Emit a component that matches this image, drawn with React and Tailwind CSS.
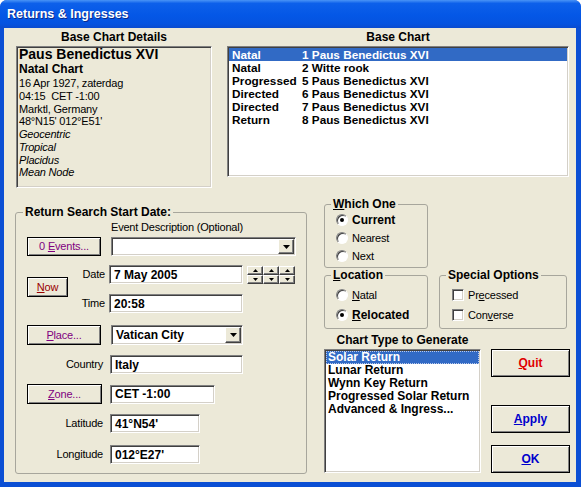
import React from 'react';

const sunken =
  'border border-t-[#808080] border-l-[#808080] border-r-white border-b-white shadow-[inset_1px_1px_0_#404040,inset_-1px_-1px_0_#d4d0c8]';
const raised =
  'bg-[#ece9d8] border border-black shadow-[inset_1px_1px_0_#ffffff,inset_-1px_-1px_0_#808080]';
const small =
  'bg-[#ece9d8] border border-t-white border-l-white border-r-[#404040] border-b-[#404040] shadow-[inset_-1px_-1px_0_#808080]';
// thin label text
const thin = 'text-[11px] tracking-[-0.2px]';
const groupBox = 'border border-[#a7a69c] rounded-[3px] min-w-0';

const Arrow = ({ up, w = 7, h = 4 }) => (
  <svg width={w} height={h} viewBox="0 0 7 4">
    <path d={up ? 'M0 4h7L3.5 0z' : 'M0 0h7L3.5 4z'} fill="#000" />
  </svg>
);

const Btn = ({ className = '', bold, children }) => (
  <button
    type="button"
    className={`${raised} flex items-center justify-center leading-none ${bold ? 'text-[12px] font-bold' : thin} ${className}`}
  >
    {children}
  </button>
);

const Field = ({ className = '', children }) => (
  <div className={`${sunken} bg-white pl-[4px] font-bold text-[12px] flex items-center ${className}`}>{children}</div>
);

const Combo = ({ className = '', text }) => (
  <div className={`${sunken} bg-white flex items-stretch p-[1px] ${className}`}>
    <div className="flex-1 pl-[3px] font-bold text-[12px] flex items-center">{text}</div>
    <div className={`${small} w-[16px] flex items-center justify-center`}>
      <Arrow />
    </div>
  </div>
);

const Spinner = () => (
  <div className="grid grid-cols-3 ml-[4px]">
    {[true, true, true, false, false, false].map((up, i) => (
      <div key={i} className={`${small} w-[16px] h-[9px] flex items-center justify-center`}>
        <Arrow up={up} w={5} h={3} />
      </div>
    ))}
  </div>
);

const Radio = ({ checked }) => (
  <span className="w-[12px] h-[12px] shrink-0 rounded-full bg-white border border-t-[#808080] border-l-[#808080] border-r-white border-b-white shadow-[inset_1px_1px_0_#404040] flex items-center justify-center">
    {checked && <span className="w-[4px] h-[4px] rounded-full bg-black" />}
  </span>
);

const Check = () => <span className={`w-[12px] h-[12px] shrink-0 bg-white ${sunken}`} />;

const baseCharts = [
  ['Natal', '1 Paus Benedictus XVI'],
  ['Natal', '2 Witte rook'],
  ['Progressed', '5 Paus Benedictus XVI'],
  ['Directed', '6 Paus Benedictus XVI'],
  ['Directed', '7 Paus Benedictus XVI'],
  ['Return', '8 Paus Benedictus XVI'],
];

const chartTypes = ['Solar Return', 'Lunar Return', 'Wynn Key Return', 'Progressed Solar Return', 'Advanced & Ingress...'];

function TopSection() {
  return (
    <div className="flex pl-[12px] pt-[2px]">
      {/* Base chart details */}
      <div className="w-[196px]">
        <div className="h-[16px] text-center font-bold text-[12px] leading-[14px]">Base Chart Details</div>
        <div className={`h-[142px] ${sunken} pl-[2px]`}>
          <div className="font-bold text-[14px] leading-[14px]">Paus Benedictus XVI</div>
          <div className="font-bold text-[12px] leading-[16px]">Natal Chart</div>
          <div className={`${thin} leading-[12.75px]`}>
            <div>16 Apr 1927, zaterdag</div>
            <div>04:15&nbsp; CET -1:00</div>
            <div>Marktl, Germany</div>
            <div>48°N15' 012°E51'</div>
            <div className="italic">Geocentric</div>
            <div className="italic">Tropical</div>
            <div className="italic">Placidus</div>
            <div className="italic">Mean Node</div>
          </div>
        </div>
      </div>

      {/* Base chart list */}
      <div className="w-[342px] ml-[15px]">
        <div className="h-[16px] text-center font-bold text-[12px] leading-[14px]">Base Chart</div>
        <div className={`h-[131px] bg-white ${sunken} p-[1px]`}>
          {baseCharts.map((r, i) => (
            <div
              key={i}
              className={`flex h-[13px] leading-[13px] pl-[3px] font-bold text-[11.75px] ${i === 0 ? 'bg-[#316ac5] text-white' : ''}`}
            >
              <span className="w-[70px]">{r[0]}</span>
              <span>{r[1]}</span>
            </div>
          ))}
        </div>
      </div>
    </div>
  );
}

function SearchGroup() {
  return (
    <fieldset className={`${groupBox} mt-[8px] w-[292px] h-[269px]`}>
      <legend className="ml-[7px] px-[2px] font-bold text-[12px] leading-[14px]">Return Search Start Date:</legend>

      <div className={`${thin} leading-[14px] pl-[95px] mt-[1px]`}>Event Description (Optional)</div>

      <div className="flex items-center mt-[3px] pl-[11px]">
        <Btn className="w-[74px] h-[19px] text-[#800080]">
          0&nbsp;<u>E</u>vents...
        </Btn>
        <Combo className="ml-[10px] w-[185px] h-[19px]" text="" />
      </div>

      <div className="flex mt-[9px] pl-[11px]">
        <div className="w-[41px]">
          <Btn className="w-[41px] h-[20px] mt-[12px] text-[#990000]">
            <u>N</u>ow
          </Btn>
        </div>
        <div className={`${thin} w-[41px] flex flex-col items-end pr-[4px]`}>
          <div className="h-[19px] leading-[19px]">Date</div>
          <div className="h-[19px] leading-[19px] mt-[10px]">Time</div>
        </div>
        <div className="flex flex-col">
          <div className="flex items-center">
            <Field className="w-[134px] h-[19px]">7 May 2005</Field>
            <Spinner />
          </div>
          <Field className="w-[134px] h-[19px] mt-[10px]">20:58</Field>
        </div>
      </div>

      <div className="flex items-center mt-[12px] pl-[11px]">
        <Btn className="w-[74px] h-[20px] text-[#800080]">
          <u>P</u>lace...
        </Btn>
        <Combo className="ml-[10px] w-[132px] h-[20px]" text="Vatican City" />
      </div>

      <div className="flex items-center mt-[10px] pl-[11px]">
        <div className={`${thin} w-[83px] text-right pr-[7px]`}>Country</div>
        <Field className="w-[133px] h-[19px]">Italy</Field>
      </div>

      <div className="flex items-center mt-[10px] pl-[11px]">
        <Btn className="w-[75px] h-[20px] text-[#800080]">
          <u>Z</u>one...
        </Btn>
        <Field className="ml-[8px] w-[105px] h-[19px]">CET -1:00</Field>
      </div>

      <div className="flex items-center mt-[10px] pl-[11px]">
        <div className={`${thin} w-[83px] text-right pr-[7px]`}>Latitude</div>
        <Field className="w-[90px] h-[19px]">41°N54'</Field>
      </div>

      <div className="flex items-center mt-[12px] pl-[11px]">
        <div className={`${thin} w-[83px] text-right pr-[7px]`}>Longitude</div>
        <Field className="w-[90px] h-[19px]">012°E27'</Field>
      </div>
    </fieldset>
  );
}

function RightColumn() {
  return (
    <div className="ml-[17px] w-[246px] flex flex-col">
      <fieldset className={`${groupBox} w-[104px] h-[71px]`}>
        <legend className="ml-[6px] px-[2px] font-bold text-[12px] leading-[14px]">
          <u>W</u>hich One
        </legend>
        <div className="flex items-center h-[18px] pl-[11px] gap-[4px] font-bold text-[12px]">
          <Radio checked />
          Current
        </div>
        <div className={`flex items-center h-[18px] pl-[11px] gap-[4px] ${thin}`}>
          <Radio />
          Nearest
        </div>
        <div className={`flex items-center h-[18px] pl-[11px] gap-[4px] ${thin}`}>
          <Radio />
          Next
        </div>
      </fieldset>

      <div className="flex gap-[11px]">
        <fieldset className={`${groupBox} w-[104px] h-[61px]`}>
          <legend className="ml-[6px] px-[2px] font-bold text-[12px] leading-[14px]">
            <u>L</u>ocation
          </legend>
          <div className={`flex items-center h-[20px] mt-[3px] pl-[11px] gap-[4px] ${thin}`}>
            <Radio />
            <span>
              <u>N</u>atal
            </span>
          </div>
          <div className="flex items-center h-[20px] pl-[11px] gap-[4px] font-bold text-[12px]">
            <Radio checked />
            <span>
              <u>R</u>elocated
            </span>
          </div>
        </fieldset>

        <fieldset className={`${groupBox} w-[128px] h-[61px]`}>
          <legend className="ml-[6px] px-[2px] font-bold text-[12px] leading-[14px]">Special Options</legend>
          <div className={`flex items-center h-[20px] mt-[3px] pl-[12px] gap-[4px] ${thin}`}>
            <Check />
            <span>
              Pr<u>e</u>cessed
            </span>
          </div>
          <div className={`flex items-center h-[20px] pl-[12px] gap-[4px] ${thin}`}>
            <Check />
            <span>
              Con<u>v</u>erse
            </span>
          </div>
        </fieldset>
      </div>

      <div className="w-[157px] mt-[4px] text-center font-bold text-[12px] leading-[14px]">Chart Type to Generate</div>

      <div className="flex mt-[2px]">
        <div className={`w-[157px] h-[124px] bg-white ${sunken} p-[1px]`}>
          {chartTypes.map((t, i) => (
            <div
              key={t}
              className={`h-[13px] leading-[11px] pl-[1px] font-bold text-[12px] border border-dotted ${
                i === 0 ? 'bg-[#316ac5] text-white border-[#b9c9ea]' : 'border-transparent'
              }`}
            >
              {t}
            </div>
          ))}
        </div>
        <div className="ml-[10px] w-[79px] flex flex-col">
          <Btn bold className="h-[28px] text-[#e00000]">
            <u>Q</u>uit
          </Btn>
          <Btn bold className="h-[28px] mt-[28px] text-[#0000cc]">
            <u>A</u>pply
          </Btn>
          <Btn bold className="h-[28px] mt-[12px] text-[#0000cc]">
            <u>O</u>K
          </Btn>
        </div>
      </div>
    </div>
  );
}

export default function App() {
  return (
    <div className="w-[581px] h-[487px] bg-white overflow-hidden font-['Liberation_Sans',Arial,sans-serif] text-black">
      <div className="w-full h-full flex flex-col rounded-t-[7px] bg-[#0b4fd4] overflow-hidden">
        <div className="h-[28px] shrink-0 flex items-center pl-[7px] bg-[linear-gradient(to_bottom,#4a94f6_0%,#0d60ea_12%,#0457e6_55%,#0553e0_85%,#0a4bcf_100%)]">
          <span className="text-white font-bold text-[12.5px] [text-shadow:1px_1px_0_#0b2a8a]">Returns &amp; Ingresses</span>
        </div>
        <div className="flex-1 ml-[4px] mr-[5px] mb-[5px] bg-[#ece9d8] flex flex-col">
          <TopSection />
          <div className="flex items-start pl-[11px] mt-[9px]">
            <SearchGroup />
            <RightColumn />
          </div>
        </div>
      </div>
    </div>
  );
}
